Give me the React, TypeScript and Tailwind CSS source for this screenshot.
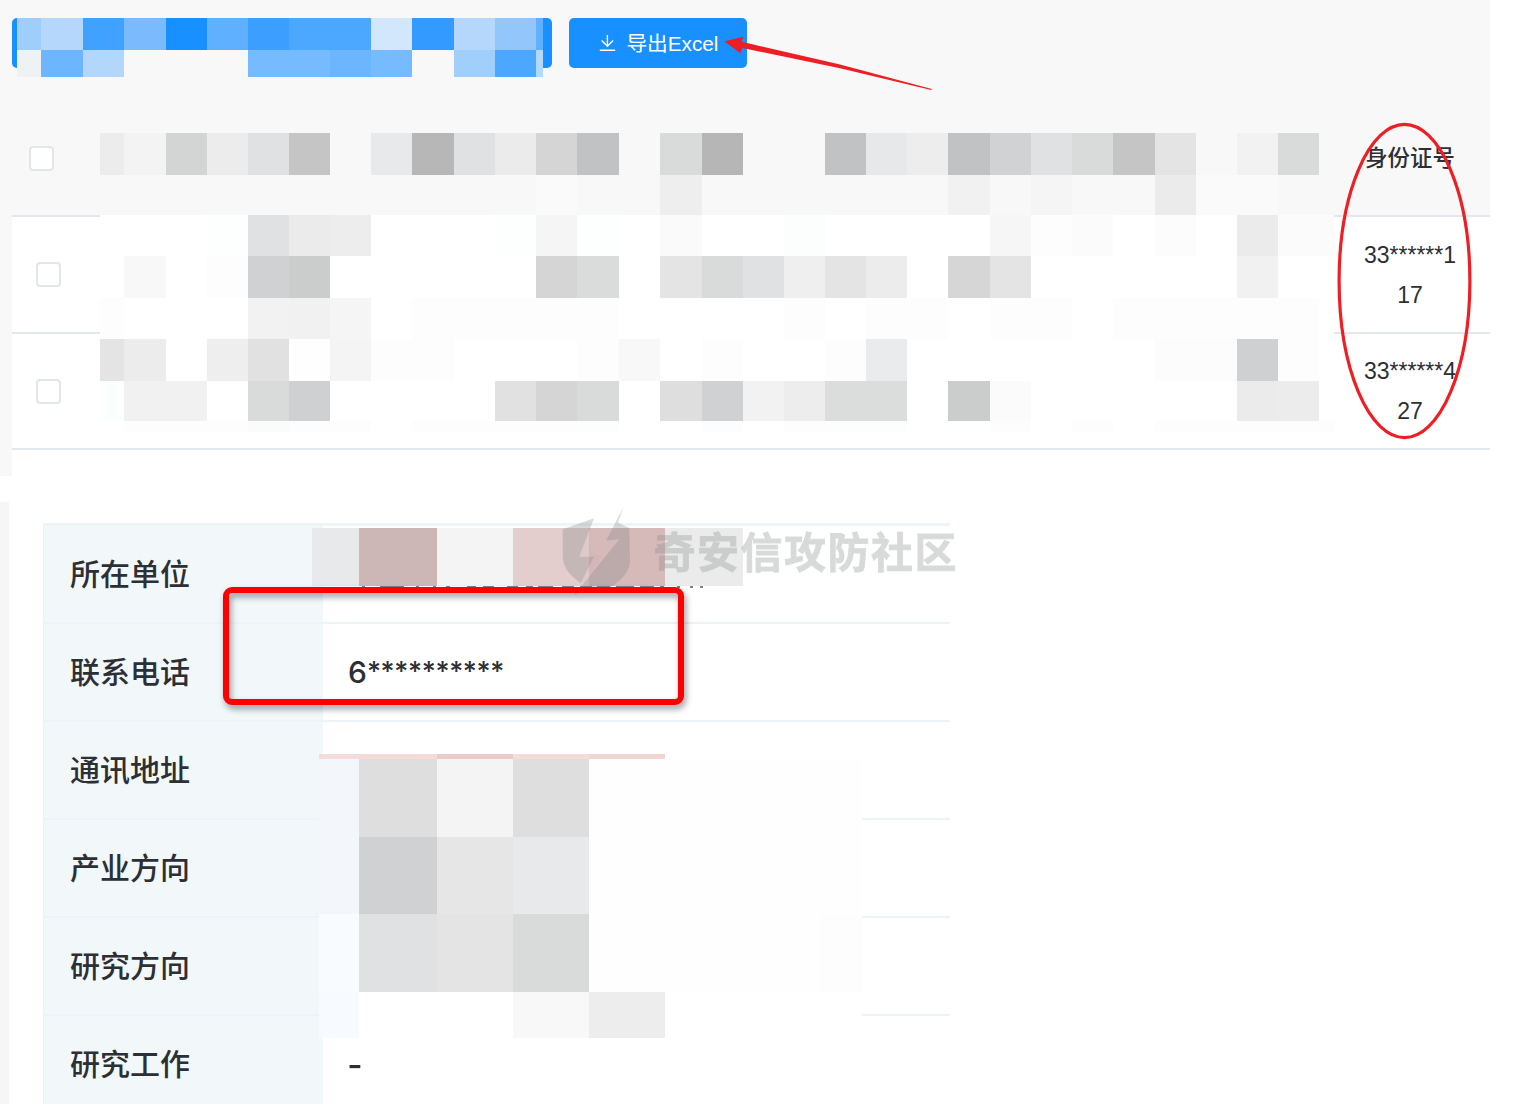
import React from "react";

type Cells = Record<number, string>;

interface MosaicProps {
  columns: number[];
  rows: { height: number; base: string; cells: Cells }[];
  className: string;
}

// Pixelated patch that hides the content underneath.
function Mosaic({ columns, rows, className }: MosaicProps) {
  return (
    <div
      aria-hidden="true"
      className={className}
      style={{
        gridTemplateColumns: columns.map((c) => c + "px").join(" "),
        gridTemplateRows: rows.map((r) => r.height + "px").join(" "),
      }}
    >
      {rows.map((row, r) =>
        columns.map((_, c) => (
          <div key={r + "-" + c} style={{ backgroundColor: row.cells[c] ?? row.base }} />
        )),
      )}
    </div>
  );
}

const PAGE = "#f8f8f8";

const buttonColumns = [24, 42, 41, 42, 41, 41, 41, 41, 41, 41, 42, 41, 41, 7];
const buttonRows = [
  {
    height: 32,
    base: PAGE,
    cells: {
      0: "#a0cefa", 1: "#b5d7fb", 2: "#40a1ff", 3: "#7abafd", 4: "#1890ff", 5: "#5fb0ff", 6: "#3c9eff",
      7: "#4ca7ff", 8: "#4ca7ff", 9: "#d3e7fc", 10: "#339bff", 11: "#b5d7fb", 12: "#93c7fc", 13: "#5fb0ff",
    },
  },
  {
    height: 27,
    base: PAGE,
    cells: {
      0: "#eef2f5", 1: "#6cb6ff", 2: "#b3d6fb", 6: "#76bbff", 7: "#76bbff", 8: "#6cb6ff", 9: "#76bbff",
      11: "#a0cffb", 12: "#4ca7ff", 13: "#b5d7fb",
    },
  },
];

const tableColumns = [
  24, 42, 41, 41, 41, 41, 41, 41, 42, 41, 41, 41, 42, 41, 42, 41, 41, 41, 41, 41, 41, 42, 41, 41, 41, 42, 41, 41, 41,
  41, 15,
];
const tableMosaic = [
  {
    height: 42,
    base: PAGE,
    cells: {
      0: "#ececec", 1: "#f3f3f3", 2: "#d3d4d4", 3: "#ececec", 4: "#dfe1e3", 5: "#c5c5c5", 7: "#e8e9ea",
      8: "#b7b7b7", 9: "#dfe1e3", 10: "#ebebeb", 11: "#d5d5d5", 12: "#c1c2c4", 14: "#d9dbda", 15: "#b6b6b6",
      18: "#c0c2c4", 19: "#e7e8ea", 20: "#ededed", 21: "#c0c2c4", 22: "#d0d2d4", 23: "#dfe1e3", 24: "#d9dbda",
      25: "#c5c5c5", 26: "#e4e4e4", 28: "#f2f2f2", 29: "#d9dbda",
    },
  },
  {
    height: 40,
    base: PAGE,
    cells: { 11: "#fafafa", 14: "#eeeeee", 21: "#f1f1f1", 23: "#f5f5f5", 26: "#ebebeb", 27: "#fafafa", 28: "#fafafa" },
  },
  {
    height: 41,
    base: "#ffffff",
    cells: {
      3: "#fcfffe", 4: "#dfe1e3", 5: "#ebebeb", 6: "#ededed", 10: "#fcfffe", 11: "#f5f5f5", 12: "#fcfffe",
      14: "#fafafa", 17: "#fcfefe", 22: "#f6f6f6", 23: "#fdfdfd", 24: "#fbfbfb", 26: "#fcfcfc", 28: "#ebebeb",
      29: "#fbfbfb", 30: "#fbfbfb",
    },
  },
  {
    height: 42,
    base: "#ffffff",
    cells: {
      1: "#f8f8f8", 3: "#fdfdfd", 4: "#d0d1d3", 5: "#cbcdcc", 11: "#d5d5d5", 12: "#dadcdb", 14: "#e4e4e4",
      15: "#d9dbda", 16: "#dfe1e3", 17: "#efefef", 18: "#e4e4e4", 19: "#ececec", 21: "#d6d6d6", 22: "#e4e4e4",
      28: "#f1f1f1",
    },
  },
  {
    height: 41,
    base: "#ffffff",
    cells: {
      0: "#fdfdfd", 4: "#f2f2f2", 5: "#f1f1f1", 6: "#f5f5f5", 8: "#fdfdfd", 9: "#fdfdfd", 10: "#fdfdfd",
      11: "#fdfdfd", 12: "#fdfdfd", 17: "#fdfdfd", 19: "#fdfdfd", 20: "#fdfdfd", 22: "#fdfdfd", 23: "#fdfdfd",
      25: "#fdfdfd", 26: "#fdfdfd", 27: "#fdfdfd", 28: "#fdfdfd", 29: "#fdfdfd",
    },
  },
  {
    height: 42,
    base: "#ffffff",
    cells: {
      0: "#e4e4e4", 1: "#ececec", 3: "#eeeeee", 4: "#e1e1e1", 5: "#fefefe", 6: "#f4f4f4", 7: "#fdfdfd",
      8: "#fdfdfd", 12: "#fdfdfd", 13: "#f8f8f8", 15: "#fdfdfd", 18: "#fdfdfd", 19: "#eaebec", 26: "#fcfcfc",
      27: "#fcfcfc", 28: "#cfd0d2", 29: "#fdfdfd",
    },
  },
  {
    height: 40,
    base: "#ffffff",
    cells: {
      0: "#fbfffd", 1: "#f1f1f1", 2: "#f1f1f1", 4: "#d9dbda", 5: "#cfd0d2", 10: "#e1e1e1", 11: "#d5d5d5",
      12: "#d9dbda", 14: "#dedede", 15: "#d0d1d3", 16: "#f2f2f2", 17: "#ededed", 18: "#dbdddc", 19: "#dbdddc",
      21: "#cbcdcc", 22: "#fbfbfb", 28: "#ebebeb", 29: "#ececec",
    },
  },
  {
    height: 11,
    base: "#ffffff",
    cells: {
      1: "#fdfdfd", 2: "#fdfdfd", 3: "#fdfdfd", 4: "#fbfbfb", 5: "#fdfdfd", 6: "#fdfdfd", 8: "#fdfdfd",
      9: "#fdfdfd", 10: "#fdfdfd", 11: "#fdfdfd", 12: "#fdfdfd", 15: "#fdfdfd", 17: "#fdfdfd", 18: "#fdfdfd",
      19: "#fdfdfd", 22: "#fdfdfd", 24: "#fdfdfd", 26: "#fdfdfd", 27: "#fdfdfd", 28: "#fdfdfd", 29: "#fdfdfd",
      30: "#fdfdfd",
    },
  },
];

const unitColumns = [47, 78, 76, 76, 76, 78];
const unitRows = [
  {
    height: 58,
    base: "#ffffff",
    cells: { 0: "#e8e9ea", 1: "#cdb6b6", 2: "#f4f4f4", 3: "#e4cdcd", 4: "#d6baba", 5: "#ebebeb" },
  },
];

const detailColumns = [40, 78, 76, 76, 76, 155, 42];
const detailRows = [
  { height: 5, base: "transparent", cells: { 0: "#f5dcdb", 1: "#f5dcdb", 2: "#eacccb", 3: "#f5dcdb", 4: "#f2d4d2" } },
  { height: 78, base: "#fefefe", cells: { 0: "#f3f7fb", 1: "#dedede", 2: "#f4f4f4", 3: "#dedede" } },
  { height: 77, base: "#fefefe", cells: { 0: "#f3f7fb", 1: "#d0d1d3", 2: "#e6e6e6", 3: "#e8e9eb" } },
  { height: 78, base: "#fefefe", cells: { 0: "#f8fbff", 1: "#dfe1e3", 2: "#e4e4e4", 3: "#d9dbda", 6: "#fdfdfd" } },
  { height: 46, base: "#ffffff", cells: { 0: "#f7fbff", 3: "#f8f8f8", 4: "#ededed" } },
];

const records = [
  ["33******1", "17"],
  ["33******4", "27"],
];

function Checkbox() {
  return <span className="block size-[25px] rounded-[4px] border-2 border-[#e2e5e9] bg-white" />;
}

function DownloadIcon() {
  return (
    <svg width="17" height="17" viewBox="0 0 17 17" fill="none" stroke="white" strokeWidth="1.4">
      <path d="M8.4 0V11M2.7 5.5L8.4 11.2L14.1 5.5M0.8 15.3H16.2" />
    </svg>
  );
}

function ExportPanel() {
  return (
    <section className="relative h-[476px] w-[1490px] bg-[#f8f8f8]">
      <div className="flex h-[100px] items-start gap-[17.4px] pt-[18px] pl-3">
        <div className="relative h-[50px] w-[540px] rounded-[5px] bg-[#1890ff]">
          <Mosaic className="absolute top-0 left-[5px] grid" columns={buttonColumns} rows={buttonRows} />
        </div>
        <button className="flex h-[50px] w-[178px] items-center rounded-[5px] bg-[#1890ff] pl-[30px] text-[20.7px] text-white">
          <DownloadIcon />
          <span className="ml-[10px] pt-px whitespace-nowrap">导出Excel</span>
        </button>
      </div>

      <div className="ml-3 text-[#2c2f33]">
        <div className="flex h-[117px] justify-between border-b-2 border-[#e3e8ee]">
          <div className="pt-[46px] pl-[17px]">
            <Checkbox />
          </div>
          <div className="w-[160px] pt-[39px] text-center text-[22.4px] leading-10 font-medium">身份证号</div>
        </div>
        {records.map(([first, second]) => (
          <div
            key={first}
            className="flex h-[116.5px] items-center justify-between border-b-2 border-[#e3e8ee] bg-white"
          >
            <div className="pt-px pl-[24px]">
              <Checkbox />
            </div>
            <div className="w-[160px] pt-px text-center text-[23px] leading-10">
              {first}
              <br />
              {second}
            </div>
          </div>
        ))}
        <div className="h-[26px] bg-white" />
      </div>

      <Mosaic className="absolute top-[133px] left-[100px] grid" columns={tableColumns} rows={tableMosaic} />

      <svg className="absolute top-0 left-0" width="1490" height="476" fill="none">
        <path
          fill="#ee1f24"
          d="M724.3 41.2L743.5 36.7L741.5 41.7L748 43.3L840 64.5L931.8 89L931.2 90L840 68.2L742.3 48L740.3 53.2Z"
        />
        <ellipse cx="1404.5" cy="281" rx="65.4" ry="156.6" stroke="#ee1f24" strokeWidth="3.2" />
      </svg>
    </section>
  );
}

function Watermark() {
  return (
    <div className="absolute top-[506px] left-[560px] flex text-[#828787] opacity-30">
      <svg width="72" height="90" viewBox="0 0 72 90" fill="currentColor" className="shrink-0">
        <path d="M2.7 23.3L34 12.3L19.3 50.7H34L20.7 77.3C8 68 2.7 60 2.7 50Z" />
        <path d="M63.3 1.3L58 16.7L69.3 22L70 55C70 70 52 82 38 87L28 81L14 89L59.3 33.3L46 34.7Z" />
        <path d="M29 27L31 46L42 50L24 76L20.7 77.3L34 50.7H19.3Z" opacity=".2" />
      </svg>
      <span className="ml-[21.5px] pt-[17.5px] text-[42px] leading-[60px] font-bold tracking-[1.5px] whitespace-nowrap [-webkit-text-stroke:0.8px_currentColor]">
        奇安信攻防社区
      </span>
    </div>
  );
}

const details: { label: string; value?: React.ReactNode }[] = [
  { label: "所在单位" },
  {
    label: "联系电话",
    value: (
      <>
        6<span className="text-[27px] tracking-[-0.35px]">**********</span>
      </>
    ),
  },
  { label: "通讯地址" },
  { label: "产业方向" },
  { label: "研究方向" },
  { label: "研究工作", value: <span className="scale-x-110 pt-[3px] font-semibold">-</span> },
];

function DetailPanel() {
  return (
    <section className="mt-[26px] flex h-[602px] overflow-hidden">
      <div className="w-[9px] bg-[#f6f6f6]" />
      <div className="mt-[21px] ml-[34px] w-[907px] text-[30px] font-medium text-[#2c2f33]">
        <div className="h-[3px] bg-[#eef5f7]" />
        {details.map(({ label, value }) => (
          <div key={label} className="flex h-[98px] border-b-2 border-[#edf3f6]">
            <div className="flex w-[280px] items-center border-l border-[#eaf2f6] bg-[#f2f7fa] pl-[26px]">
              {label}
            </div>
            <div className="flex items-center pl-[25px] font-['Inter']">{value}</div>
          </div>
        ))}
      </div>
    </section>
  );
}

export default function App() {
  return (
    <main className="relative h-[1104px] w-[1522px] overflow-hidden bg-white font-['Liberation_Sans','Noto_Sans_CJK_SC',sans-serif]">
      <ExportPanel />
      <DetailPanel />
      <Mosaic className="absolute top-[528px] left-[312px] grid" columns={unitColumns} rows={unitRows} />
      <svg className="absolute top-[585px] left-[358px]" width="350" height="4">
        <path
          d="M4 2H7M22 2H46M58 2H61M75 2H78M88 2H92M109 2H118M125 2H136M149 2H160M168 2H175M180 2H195M204 2H216M222 2H234M239 2H252M258 2H276M282 2H296M302 2H306M319 2H322M332 2H335M342 2H345"
          stroke="#55585a"
          strokeWidth="1.6"
        />
      </svg>
      <Mosaic className="absolute top-[754px] left-[319px] grid" columns={detailColumns} rows={detailRows} />
      <Watermark />
      <div className="absolute top-[587px] left-[222.5px] h-[117.5px] w-[461px] rounded-[9px] border-[6px] border-[#ff0000] drop-shadow-[2px_4px_3px_rgba(0,0,0,0.4)]" />
    </main>
  );
}
